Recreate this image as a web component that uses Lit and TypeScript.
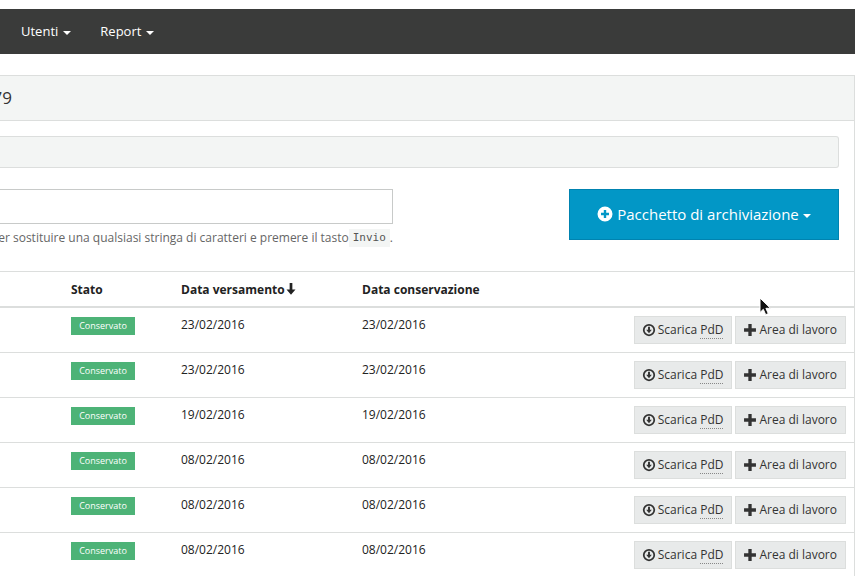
import { LitElement, html, css, svg } from "lit";
import { customElement, property } from "lit/decorators.js";

type IconName = "plus-circle" | "download" | "plus" | "arrow-down";

const ICONS: Record<IconName, unknown> = {
  "plus-circle": svg`<path fill-rule="evenodd" d="M8 .5a7.500 7.500 0 1 0 0 15A7.500 7.500 0 0 0 8 .5zM6.800 4h2.400v2.800H12v2.400H9.200V12H6.800V9.200H4V6.800h2.800z"/>`,
  download: svg`<path fill-rule="evenodd" d="M8 1a7 7 0 1 0 0 14A7 7 0 0 0 8 1zm0 2a5 5 0 1 1 0 10A5 5 0 0 1 8 3z"/><path d="M6.900 4.400h2.200v3.400h2.100L8 11.600 4.800 7.800h2.100z"/>`,
  plus: svg`<path d="M6.100 1.200h3.800v4.900h4.900v3.800H9.900v4.900H6.100V9.900H1.200V6.100h4.900z"/>`,
  "arrow-down": svg`<path d="M6.200 0h3.600v8.500h4.200L8 15.500 2 8.500h4.200z"/>`,
};

@customElement("app-icon")
export class AppIcon extends LitElement {
  @property() name: IconName = "plus";

  static styles = css`
    :host {
      display: inline-flex;
      flex: none;
      width: 14px;
      height: 14px;
    }
    svg {
      width: 100%;
      height: 100%;
      fill: currentColor;
    }
  `;

  render() {
    return html`<svg viewBox="0 0 16 16" aria-hidden="true">${ICONS[this.name]}</svg>`;
  }
}

const ROWS = [
  "23/02/2016",
  "23/02/2016",
  "19/02/2016",
  "08/02/2016",
  "08/02/2016",
  "08/02/2016",
];

@customElement("app-root")
export class AppRoot extends LitElement {
  static styles = css`
    * {
      box-sizing: border-box;
    }
    :host {
      display: block;
      height: 100vh;
      overflow: hidden;
      position: relative;
      padding: 9px 9px 0 0;
      background: #fff;
      color: #222;
      font: 12px/18px "Open Sans", "Noto Sans", sans-serif;
    }
    button {
      font: inherit;
      color: inherit;
      margin: 0;
      cursor: pointer;
    }
    .navbar {
      display: flex;
      align-items: center;
      gap: 29px;
      height: 45px;
      padding: 0 0 2px 21px;
      background: #3a3b3a;
      color: #fff;
    }
    .nav-item {
      display: flex;
      align-items: center;
      gap: 5px;
      padding: 0;
      border: 0;
      background: none;
      font-size: 13px;
    }
    .caret {
      margin-top: 4px;
      border: 4px solid transparent;
      border-top-color: currentColor;
      border-bottom: 0;
    }
    .panel {
      margin-top: 21px;
      border: 1px solid #dcdedd;
      border-left: 0;
      border-bottom: 0;
    }
    .panel-heading {
      display: flex;
      align-items: center;
      height: 45px;
      background: #f3f5f4;
      border-bottom: 1px solid #dcdedd;
    }
    .title {
      display: flex;
      justify-content: flex-end;
      width: 12px;
      margin: 0;
      overflow: hidden;
      font-size: 17px;
      line-height: 24px;
      font-weight: 400;
      color: #333;
    }
    .panel-body {
      padding: 15px 15px 24px 0;
    }
    .well {
      height: 32px;
      border: 1px solid #dcdedd;
      border-left: 0;
      border-radius: 0 3px 3px 0;
      background: #f3f5f4;
    }
    .tools {
      display: flex;
      justify-content: space-between;
      align-items: flex-start;
      margin-top: 21px;
    }
    .search {
      width: 393px;
    }
    .search-input {
      display: block;
      width: 100%;
      height: 35px;
      padding: 0 12px;
      border: 1px solid #c8cac9;
      border-left: 0;
      background: #fff;
      font: inherit;
    }
    .help {
      display: flex;
      justify-content: flex-end;
      margin: 5px 0 0;
      overflow: hidden;
      white-space: pre;
      color: #666;
    }
    .help code {
      padding: 0 4px;
      background: #f3f5f4;
      font: 11px/18px "DejaVu Sans Mono", monospace;
      color: #555;
    }
    .primary {
      display: flex;
      align-items: center;
      justify-content: center;
      gap: 4px;
      width: 270px;
      height: 51px;
      padding: 0 0 2px;
      border: 1px solid #0083b0;
      background: #0297c6;
      color: #fff;
      font-size: 15px;
      font-weight: 500;
    }
    .primary app-icon {
      width: 16px;
      height: 16px;
    }
    table {
      width: 100%;
      table-layout: fixed;
      border-collapse: separate;
      border-spacing: 0;
      border-top: 1px solid #dcdedd;
    }
    th,
    td {
      padding: 8px;
      text-align: left;
      vertical-align: top;
      border-bottom: 1px solid #dcdedd;
    }
    th {
      padding: 9px 8px 7px;
      border-bottom-width: 2px;
      font-weight: 700;
    }
    th app-icon {
      width: 12px;
      height: 12px;
      vertical-align: -1px;
    }
    .col-id {
      width: 63px;
    }
    .col-state {
      width: 110px;
    }
    .col-date {
      width: 181px;
    }
    .badge {
      display: block;
      width: 64px;
      height: 18px;
      margin-top: 1px;
      background: #4db377;
      color: #fff;
      font-size: 9px;
      text-align: center;
    }
    .actions {
      display: flex;
      justify-content: flex-end;
      gap: 3px;
    }
    .action {
      display: flex;
      align-items: center;
      gap: 2px;
      height: 28px;
      padding: 0 8px 0 7px;
      border: 1px solid #dcdedd;
      background: #e8eaea;
      color: #333;
      white-space: nowrap;
    }
    abbr {
      text-decoration: none;
      border-bottom: 1px dotted #888;
    }
    .cursor {
      position: absolute;
      left: 759px;
      top: 297px;
      width: 13px;
      height: 19px;
    }
  `;

  private renderRow(date: string) {
    return html`
      <tr>
        <td></td>
        <td><span class="badge">Conservato</span></td>
        <td>${date}</td>
        <td>${date}</td>
        <td>
          <div class="actions">
            <button class="action" type="button">
              <app-icon name="download"></app-icon>
              <span>Scarica <abbr>PdD</abbr></span>
            </button>
            <button class="action" type="button">
              <app-icon name="plus"></app-icon>
              <span>Area di lavoro</span>
            </button>
          </div>
        </td>
      </tr>
    `;
  }

  render() {
    return html`
      <nav class="navbar">
        <button class="nav-item" type="button">Utenti <span class="caret"></span></button>
        <button class="nav-item" type="button">Report <span class="caret"></span></button>
      </nav>
      <main class="panel">
        <header class="panel-heading"><h1 class="title">79</h1></header>
        <div class="panel-body">
          <div class="well"></div>
          <div class="tools">
            <div class="search">
              <input class="search-input" type="text" aria-labelledby="help" />
              <p class="help" id="help"><span>er sostituire una qualsiasi stringa di caratteri e premere il tasto</span><code>Invio</code><span>.</span></p>
            </div>
            <button class="primary" type="button">
              <app-icon name="plus-circle"></app-icon>
              <span>Pacchetto di archiviazione</span>
              <span class="caret"></span>
            </button>
          </div>
        </div>
        <table>
          <thead>
            <tr>
              <th class="col-id"></th>
              <th class="col-state">Stato</th>
              <th class="col-date">Data versamento<app-icon name="arrow-down"></app-icon></th>
              <th class="col-date">Data conservazione</th>
              <th></th>
            </tr>
          </thead>
          <tbody>
            ${ROWS.map((date) => this.renderRow(date))}
          </tbody>
        </table>
      </main>
      <svg class="cursor" viewBox="0 0 13 19" aria-hidden="true">
        <path
          d="M1 1v14.500l3.300-3.200 2.400 5.400 2.600-1.100-2.400-5.300H11.500z"
          fill="#111"
          stroke="#fff"
          stroke-width="1"
        />
      </svg>
    `;
  }
}
